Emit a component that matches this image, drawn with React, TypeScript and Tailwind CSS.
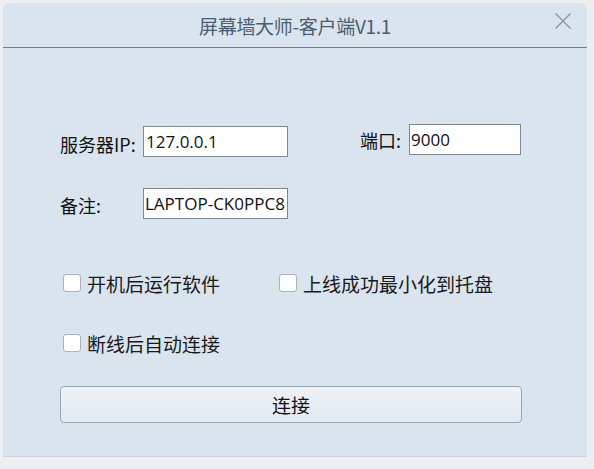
export default function App() {
  const cjk = { fontFamily: '"Noto Sans CJK SC", "Noto Sans", sans-serif' };
  const latin = { fontFamily: '"Open Sans", "Noto Sans CJK SC", sans-serif' };

  return (
    <div className="w-[594px] h-[469px] bg-[#eceff2] pt-[3px] pl-[3px] overflow-hidden" style={cjk}>
      <div className="w-[584px] h-[454px] bg-[#d9e4ee] rounded-t-[6px] border-b border-[#c9d2db] flex flex-col">
        {/* title bar */}
        <div className="relative h-[45px] border-b border-[#6f7c88] flex items-center justify-center">
          <span className="text-[19px] text-[#4b5e71] leading-none tracking-[-0.3px]">屏幕墙大师-客户端V1.1</span>
          <svg className="absolute right-[15px] top-[9px]" width="18" height="18" viewBox="0 0 18 18">
            <path d="M1.5 1.5 L16.5 16.5 M16.5 1.5 L1.5 16.5" stroke="#8c949b" strokeWidth="1.4" fill="none" />
          </svg>
        </div>

        {/* body */}
        <div className="pl-[57px] pt-[76px] flex flex-col">
          <div className="flex h-[33px]">
            <div className="flex items-center mt-[2px] h-[31px]">
              <span className="w-[83px] text-[18px] text-[#111] leading-none mt-[5px]">服务器IP:</span>
              <div className="w-[145px] h-[31px] bg-white border border-[#7d8894] flex items-center pl-[2px] text-[17px] text-[#111]" style={latin}>
                127.0.0.1
              </div>
            </div>
            <div className="flex items-center ml-[72px] h-[31px]">
              <span className="w-[49px] text-[18px] text-[#111] leading-none">端口:</span>
              <div className="w-[112px] h-[31px] bg-white border border-[#7d8894] flex items-center pl-[1px] text-[17px] text-[#111]" style={latin}>
                9000
              </div>
            </div>
          </div>

          <div className="flex items-center mt-[31px] h-[31px]">
            <span className="w-[83px] text-[18px] text-[#111] leading-none mt-[2px]">备注:</span>
            <div className="w-[145px] h-[31px] bg-white border border-[#7d8894] flex items-center pl-[1px] text-[17px] text-[#111] overflow-hidden whitespace-nowrap" style={latin}>
              LAPTOP-CK0PPC8
            </div>
          </div>

          <div className="flex mt-[55px] pl-[3px] h-[18px]">
            <label className="w-[216px] flex items-center gap-[6px]">
              <span className="w-[18px] h-[18px] bg-white border border-[#a9b1b9] rounded-[3px]" />
              <span className="text-[19px] text-[#1a1a1a] leading-none">开机后运行软件</span>
            </label>
            <label className="flex items-center gap-[6px]">
              <span className="w-[18px] h-[18px] bg-white border border-[#a9b1b9] rounded-[3px]" />
              <span className="text-[19px] text-[#1a1a1a] leading-none">上线成功最小化到托盘</span>
            </label>
          </div>

          <div className="flex mt-[42px] pl-[3px] h-[18px]">
            <label className="flex items-center gap-[6px]">
              <span className="w-[18px] h-[18px] bg-white border border-[#a9b1b9] rounded-[3px]" />
              <span className="text-[19px] text-[#1a1a1a] leading-none">断线后自动连接</span>
            </label>
          </div>

          <button className="mt-[34px] w-[462px] h-[37px] rounded-[4px] border border-[#9aa6b2] bg-gradient-to-b from-[#eef2f6] to-[#e2e9f0] text-[19px] text-[#111] leading-none flex items-center justify-center">
            连接
          </button>
        </div>
      </div>
    </div>
  );
}
